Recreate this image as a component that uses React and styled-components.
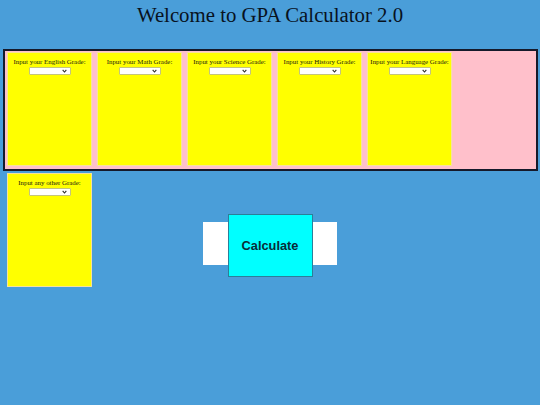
import React from "react";
import styled, { createGlobalStyle } from "styled-components";

const subjects = ["English", "Math", "Science", "History", "Language"];

const App = () => {
  return (
    <>
      <Global />
      <Title>Welcome to GPA Calculator 2.0</Title>
      <Board>
        {subjects.map((s) => (
          <GradeCard key={s} label={`Input your ${s} Grade:`} />
        ))}
      </Board>
      <BottomRow>
        <GradeCard label="Input any other Grade:" />
        <ButtonHolder>
          <CalcButton>Calculate</CalcButton>
        </ButtonHolder>
      </BottomRow>
    </>
  );
};

const GradeCard = ({ label }) => (
  <Card>
    <Label>{label}</Label>
    <SelectWrap>
      <Select defaultValue="">
        <option value=""></option>
        <option>A</option>
        <option>B</option>
        <option>C</option>
        <option>D</option>
        <option>F</option>
      </Select>
      <Chevron viewBox="0 0 6 4">
        <path d="M0.8 0.6 L3 3.2 L5.2 0.6" fill="none" stroke="#2a2a2a" strokeWidth="1.3" />
      </Chevron>
    </SelectWrap>
  </Card>
);

const Global = createGlobalStyle`
  html, body {
    margin: 0;
    background: #4a9ed9;
    height: 100%;
  }
  body {
    font-family: "Liberation Serif", "Times New Roman", serif;
  }
`;

const Title = styled.h1`
  margin: 3px 0 0;
  font-size: 20.8px;
  font-weight: normal;
  line-height: 23px;
  text-align: center;
  color: #08121e;
`;

const Board = styled.div`
  display: flex;
  gap: 5px;
  margin: 23px 2px 0 3px;
  padding: 1px 2px 3px 2px;
  background: #ffc0cb;
  border: 2px solid #15192a;
`;

const Card = styled.div`
  box-sizing: border-box;
  width: 85px;
  height: 114px;
  flex: none;
  background: #ffff00;
  border: 1px solid #f7e29a;
  padding-top: 5px;
  display: flex;
  flex-direction: column;
  align-items: center;
`;

const Label = styled.div`
  font-size: 6.9px;
  line-height: 8px;
  color: #1a1a10;
  white-space: nowrap;
`;

const SelectWrap = styled.span`
  position: relative;
  display: inline-block;
  width: 42px;
  height: 8px;
  margin-top: 0.5px;
`;

const Select = styled.select`
  appearance: none;
  box-sizing: border-box;
  width: 42px;
  height: 8px;
  margin: 0;
  padding: 0;
  font-size: 5px;
  background: #ffffff;
  border: 1px solid #c4c47c;
  border-radius: 1px;
  display: block;
`;

const Chevron = styled.svg`
  position: absolute;
  right: 3.5px;
  top: 2px;
  width: 5px;
  height: 4px;
  pointer-events: none;
`;

const BottomRow = styled.div`
  display: grid;
  grid-template-columns: 1fr auto 1fr;
  align-items: start;
  padding: 2px 7px 0;
`;

const ButtonHolder = styled.div`
  grid-column: 2;
  margin-top: 49px;
  width: 134px;
  height: 43px;
  background: #ffffff;
  display: flex;
  justify-content: center;
  align-items: center;
`;

const CalcButton = styled.button`
  flex: none;
  box-sizing: border-box;
  width: 85px;
  height: 63px;
  margin-top: 4px;
  background: #00ffff;
  border: 1px solid #2b7f99;
  font-family: "Liberation Sans", Arial, sans-serif;
  font-weight: bold;
  font-size: 12.8px;
  color: #0a2c38;
  cursor: pointer;
`;

export default App;
